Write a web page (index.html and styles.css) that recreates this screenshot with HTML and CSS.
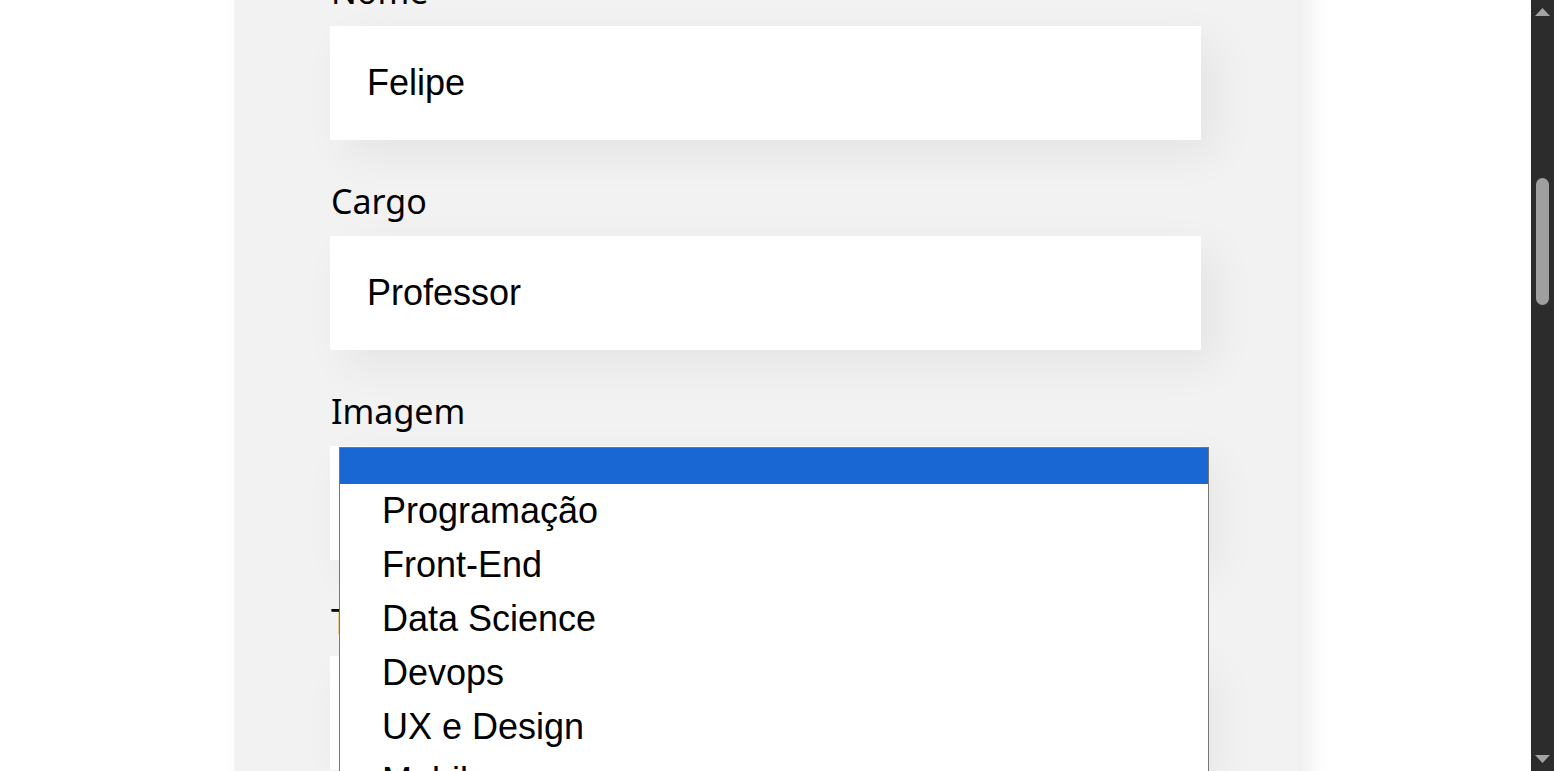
FILE: index.html
```html
<!DOCTYPE html>
<html lang="pt-BR">
<head>
<meta charset="utf-8">
<title>Organo</title>
<link rel="stylesheet" href="styles.css">
</head>
<body>
<div class="page">
  <main class="content">
    <form class="formulario">
      <div class="campo">
        <label class="rotulo">Nome</label>
        <input class="entrada" type="text" value="Felipe">
      </div>
      <div class="campo">
        <label class="rotulo">Cargo</label>
        <input class="entrada" type="text" value="Professor">
      </div>
      <div class="campo">
        <label class="rotulo">Imagem</label>
        <div class="lista-wrap">
          <div class="entrada"></div>
          <ul class="popup">
            <li class="opcao opcao-vazia selecionada"></li>
            <li class="opcao">Programação</li>
            <li class="opcao">Front-End</li>
            <li class="opcao">Data Science</li>
            <li class="opcao">Devops</li>
            <li class="opcao">UX e Design</li>
            <li class="opcao">Mobile</li>
            <li class="opcao">Inovação e Gestão</li>
          </ul>
        </div>
      </div>
      <div class="campo">
        <label class="rotulo">Time</label>
        <div class="entrada"></div>
      </div>
    </form>
  </main>
  <aside class="scrollbar">
    <div class="sb-btn">
      <svg width="23" height="23" viewBox="0 0 23 23"><polygon points="4,16 11.5,8 19,16" fill="#a3a3a3"/></svg>
    </div>
    <div class="sb-track">
      <div class="sb-thumb"></div>
    </div>
    <div class="sb-btn">
      <svg width="23" height="23" viewBox="0 0 23 23"><polygon points="4,7 19,7 11.5,15" fill="#a3a3a3"/></svg>
    </div>
  </aside>
</div>
</body>
</html>
```

FILE: styles.css
```css
html, body {
  margin: 0;
  padding: 0;
  height: 100%;
  overflow: hidden;
  background: #ffffff;
}

.page {
  display: flex;
  height: 100vh;
}

.content {
  flex: 1;
  display: flex;
  justify-content: center;
  align-items: flex-start;
  overflow: hidden;
}

.formulario {
  width: 1063px;
  box-sizing: border-box;
  margin-top: -34px;
  padding: 0 96px 60px;
  background: #f2f2f2;
  border-radius: 0 0 30px 30px;
  box-shadow: 12px 12px 24px rgba(0, 0, 0, 0.08);
  display: flex;
  flex-direction: column;
  gap: 36px;
}

.campo {
  display: flex;
  flex-direction: column;
}

.rotulo {
  display: block;
  font-family: "Noto Sans", "Open Sans", sans-serif;
  font-size: 34px;
  line-height: 46px;
  padding-top: 2px;
  padding-left: 1px;
  color: #000;
  margin-bottom: 12px;
}

.entrada {
  display: block;
  width: 100%;
  height: 114px;
  box-sizing: border-box;
  border: none;
  outline: none;
  background: #ffffff;
  box-shadow: 15px 15px 45px rgba(0, 0, 0, 0.06);
  padding: 0 37px;
  font-family: "Liberation Sans", Arial, sans-serif;
  font-size: 36px;
  color: #000;
}

.lista-wrap {
  position: relative;
}

.popup {
  position: absolute;
  left: 9px;
  top: 1px;
  width: 870px;
  box-sizing: border-box;
  margin: 0;
  padding: 0;
  list-style: none;
  background: #ffffff;
  border: 1px solid #767676;
  z-index: 5;
}

.opcao {
  font-family: "Liberation Sans", Arial, sans-serif;
  font-size: 36px;
  line-height: 41px;
  height: 54px;
  box-sizing: border-box;
  padding: 6px 0 7px 42px;
  color: #000;
  white-space: nowrap;
}

.opcao-vazia {
  height: 36px;
  padding: 0;
}

.selecionada {
  background: #1967d2;
}

.scrollbar {
  width: 23px;
  flex: none;
  height: 100vh;
  background: #2c2c2c;
  display: flex;
  flex-direction: column;
}

.sb-btn {
  height: 23px;
  flex: none;
}

.sb-btn svg {
  display: block;
}

.sb-track {
  flex: 1;
  display: flex;
  flex-direction: column;
  align-items: center;
}

.sb-thumb {
  margin-top: 155px;
  width: 13px;
  height: 127px;
  border-radius: 7px;
  background: #9f9f9f;
}
```
